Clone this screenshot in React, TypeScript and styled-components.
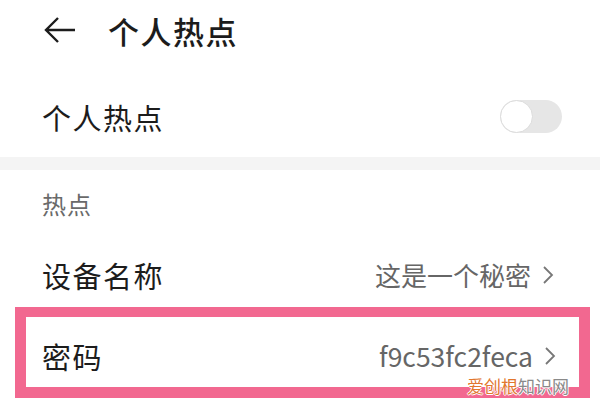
import React from 'react';
import styled, { createGlobalStyle } from 'styled-components';

const GlobalStyle = createGlobalStyle`
  html, body {
    margin: 0;
    padding: 0;
    background: #ffffff;
  }
  body {
    font-family: "Noto Sans CJK SC", "Noto Sans", Roboto, sans-serif;
    color: #1c1c1c;
  }
`;

const Page = styled.div`
  position: relative;
  width: 600px;
  height: 405px;
  overflow: hidden;
  display: flex;
  flex-direction: column;
  background: #fff;
`;

const Header = styled.div`
  height: 60px;
  display: flex;
  align-items: center;
  padding-left: 44px;
  gap: 32px;
`;

const BackButton = styled.button`
  border: none;
  background: none;
  padding: 0;
  width: 32px;
  height: 28px;
  display: flex;
  align-items: center;
  color: #1c1c1c;
`;

const Title = styled.h1`
  margin: 0;
  font-size: 31px;
  font-weight: 500;
  letter-spacing: 1.5px;
`;

const Row = styled.div<{ $height: number; $pad?: number; $top?: number }>`
  height: ${p => p.$height}px;
  box-sizing: border-box;
  display: flex;
  align-items: center;
  justify-content: space-between;
  padding: ${p => p.$top ?? 0}px ${p => p.$pad ?? 42}px 0 42px;
`;

const Label = styled.span`
  font-size: 29px;
  letter-spacing: 1.5px;
`;

const Value = styled.span`
  display: flex;
  align-items: center;
  gap: 10px;
  font-size: 26px;
  line-height: 30px;
  color: #666;
`;

const Code = styled.span`
  font-size: 26.5px;
`;

const Chevron = styled.svg`
  width: 14px;
  height: 20px;
`;

const Divider = styled.div`
  height: 13px;
  background: #f4f4f4;
`;

const SectionTitle = styled.div`
  height: 66px;
  display: flex;
  align-items: center;
  padding-left: 42px;
  font-size: 24px;
  color: #6a6a6a;
  letter-spacing: 1px;
`;

const Switch = styled.div`
  width: 62px;
  height: 33px;
  border-radius: 17px;
  background: #e6e6e6;
  display: flex;
  align-items: center;
`;

const Knob = styled.div`
  width: 31px;
  height: 31px;
  border-radius: 50%;
  background: #fff;
  border: 1px solid #dcdcdc;
`;

const Highlight = styled.div`
  margin: 0 10px 0 15px;
  height: 91px;
  box-sizing: border-box;
  border: 11px solid #f26890;
  border-top-width: 10px;
  display: flex;
  align-items: center;
  justify-content: space-between;
  padding: 8px 22px 0 16px;
`;

const Watermark = styled.div`
  position: absolute;
  left: 467px;
  top: 377px;
  font-size: 17px;
  line-height: 17px;
  font-family: "Noto Sans CJK SC", sans-serif;
  color: #8a8a8a;
  text-shadow: 1px 0 #fff, -1px 0 #fff, 0 1px #fff, 0 -1px #fff;
`;

const Accent = styled.span`
  color: #e2772e;
`;

const ChevronIcon = () => (
  <Chevron viewBox="0 0 14 20">
    <path d="M3 2 L11 10 L3 18" fill="none" stroke="#777" strokeWidth="1.8" />
  </Chevron>
);

export default function App() {
  return (
    <Page>
      <GlobalStyle />
      <Header>
        <BackButton>
          <svg width="32" height="28" viewBox="0 0 32 28">
            <path d="M14 2 L2 14 L14 26 M2 14 H31" fill="none" stroke="#1c1c1c" strokeWidth="2.4" />
          </svg>
        </BackButton>
        <Title>个人热点</Title>
      </Header>
      <Row $height={97} $pad={38} $top={16}>
        <Label>个人热点</Label>
        <Switch>
          <Knob />
        </Switch>
      </Row>
      <Divider />
      <SectionTitle>热点</SectionTitle>
      <Row $height={71} $pad={45} $top={6}>
        <Label>设备名称</Label>
        <Value>
          这是一个秘密
          <ChevronIcon />
        </Value>
      </Row>
      <Highlight>
        <Label>密码</Label>
        <Value>
          <Code>f9c53fc2feca</Code>
          <ChevronIcon />
        </Value>
      </Highlight>
      <Watermark>
        <Accent>爱创根</Accent>知识网
      </Watermark>
    </Page>
  );
}
